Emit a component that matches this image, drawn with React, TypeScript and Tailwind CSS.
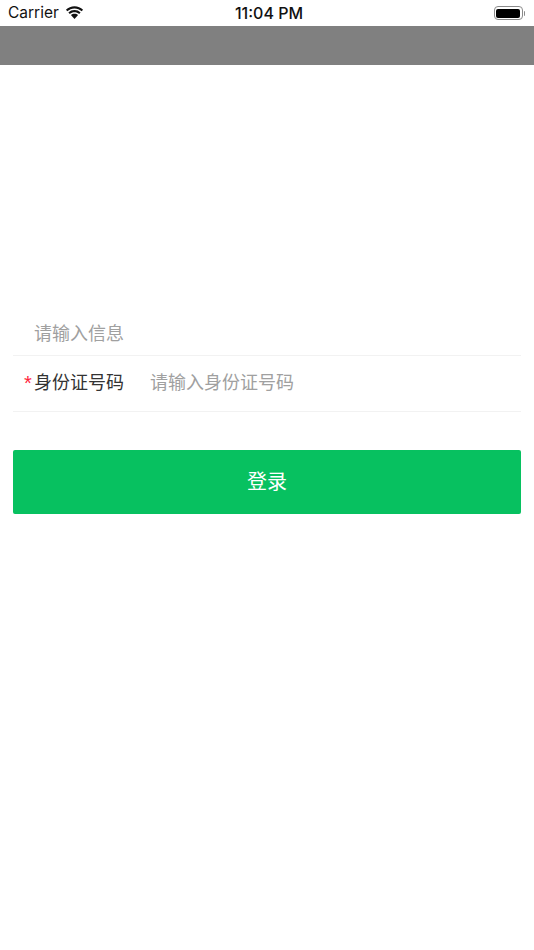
import React from "react";

const StatusBar = () => (
  <div className="h-[26px] bg-white flex items-center justify-between pl-[8px] pr-[9px] relative">
    <div className="flex items-center gap-[6px]">
      <span className="text-[15.5px] text-[#111] leading-none font-['Inter',sans-serif]">Carrier</span>
      <svg width="19" height="14" viewBox="0 0 18 13">
        <path d="M9 2.200c2.600 0 5 1 6.800 2.700l1.300-1.400C15 1.400 12.100.2 9 .2S3 1.400.9 3.500l1.300 1.400C4 3.200 6.400 2.200 9 2.200z" fill="#111" />
        <path d="M9 5.700c1.700 0 3.200.6 4.400 1.700l1.400-1.400C13.200 4.500 11.200 3.700 9 3.700s-4.200.8-5.800 2.300l1.400 1.400C5.800 6.300 7.300 5.700 9 5.700z" fill="#111" />
        <path d="M9 7.200c-1.300 0-2.500.5-3.400 1.300L9 12.300l3.400-3.800C11.500 7.700 10.300 7.200 9 7.200z" fill="#111" />
      </svg>
    </div>
    <span className="absolute left-[4px] right-0 text-center text-[16px] font-medium text-[#111] leading-none font-['Inter',sans-serif]">11:04 PM</span>
    <div className="flex items-center">
      <div className="w-[29px] h-[14px] rounded-[4px] border border-[#8a8a8a] p-[1.5px]">
        <div className="w-full h-full rounded-[2px] bg-black" />
      </div>
      <div className="w-[1.5px] h-[5px] bg-[#8a8a8a] ml-[1px] rounded-r-sm" />
    </div>
  </div>
);

export default function App() {
  return (
    <div className="w-[534px] h-[950px] bg-white font-['Liberation_Sans','Noto_Sans_CJK_SC',sans-serif] overflow-hidden">
      <StatusBar />
      <div className="h-[39px] bg-[#808080]" />
      <div className="pt-[242px] px-[13px]">
        <div className="h-[49px] border-b border-[#f2f2f2] pl-[21px] pt-[5px] flex items-center">
          <span className="text-[18px] text-[#a0a0a0] leading-none">请输入信息</span>
        </div>
        <div className="h-[56px] border-b border-[#f2f2f2] pb-[2px] flex items-center">
          <span className="w-[21px] pl-[11px] text-[20px] text-[#ff1f3d] leading-none">*</span>
          <span className="w-[116px] text-[18px] text-[#333] leading-none">身份证号码</span>
          <span className="text-[18px] text-[#a0a0a0] leading-none">请输入身份证号码</span>
        </div>
        <button className="mt-[38px] w-full h-[64px] bg-[#07c160] rounded-[2px] text-white text-[20px] flex items-center justify-center">
          登录
        </button>
      </div>
    </div>
  );
}
